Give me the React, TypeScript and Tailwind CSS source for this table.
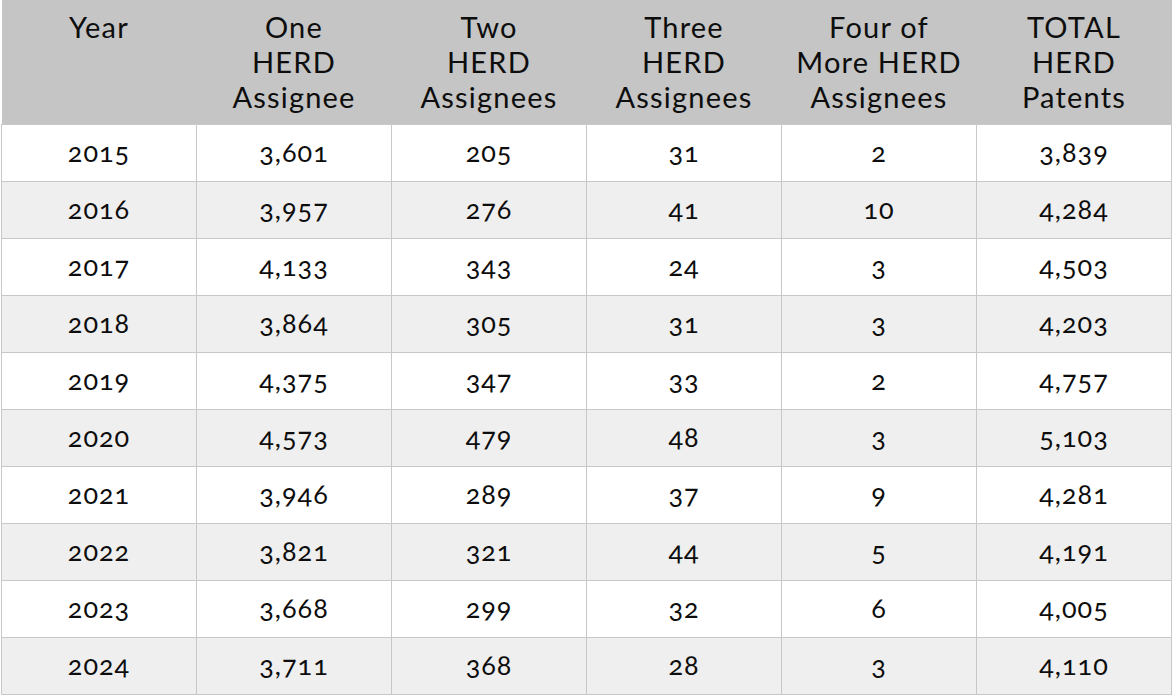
const headers = [
  ["Year"],
  ["One", "HERD", "Assignee"],
  ["Two", "HERD", "Assignees"],
  ["Three", "HERD", "Assignees"],
  ["Four of", "More HERD", "Assignees"],
  ["TOTAL", "HERD", "Patents"],
];

const rows = [
  ["2015", "3,601", "205", "31", "2", "3,839"],
  ["2016", "3,957", "276", "41", "10", "4,284"],
  ["2017", "4,133", "343", "24", "3", "4,503"],
  ["2018", "3,864", "305", "31", "3", "4,203"],
  ["2019", "4,375", "347", "33", "2", "4,757"],
  ["2020", "4,573", "479", "48", "3", "5,103"],
  ["2021", "3,946", "289", "37", "9", "4,281"],
  ["2022", "3,821", "321", "44", "5", "4,191"],
  ["2023", "3,668", "299", "32", "6", "4,005"],
  ["2024", "3,711", "368", "28", "3", "4,110"],
];

export default function App() {
  return (
    <div className="h-[696px] w-[1172px] bg-white pl-px font-['Lato','Liberation_Sans',sans-serif] text-[#0d0d0d]">
      <table className="w-[1170px] table-fixed border-collapse text-center">
        <colgroup>
          <col className="w-[195px]" />
          <col className="w-[195px]" />
          <col className="w-[195px]" />
          <col className="w-[195px]" />
          <col className="w-[195px]" />
          <col className="w-[195px]" />
        </colgroup>
        <thead>
          <tr className="h-[124px] border-b border-b-[#8c8c8c] bg-[#c4c5c4]">
            {headers.map((lines, i) => (
              <th key={i} className="px-1 pt-[9px] align-top text-[29px] font-normal leading-[35px] tracking-[1.2px]">
                {lines.map((l) => (
                  <div key={l}>{l}</div>
                ))}
              </th>
            ))}
          </tr>
        </thead>
        <tbody>
          {rows.map((row, r) => (
            <tr key={row[0]} className={r % 2 === 1 ? "h-[57px] bg-[#efefef]" : "h-[57px] bg-white"}>
              {row.map((cell, c) => (
                <td key={c} className="border border-[#c8c8c8] text-[27px] tracking-[1px] oldstyle-nums">
                  {cell}
                </td>
              ))}
            </tr>
          ))}
        </tbody>
      </table>
    </div>
  );
}
